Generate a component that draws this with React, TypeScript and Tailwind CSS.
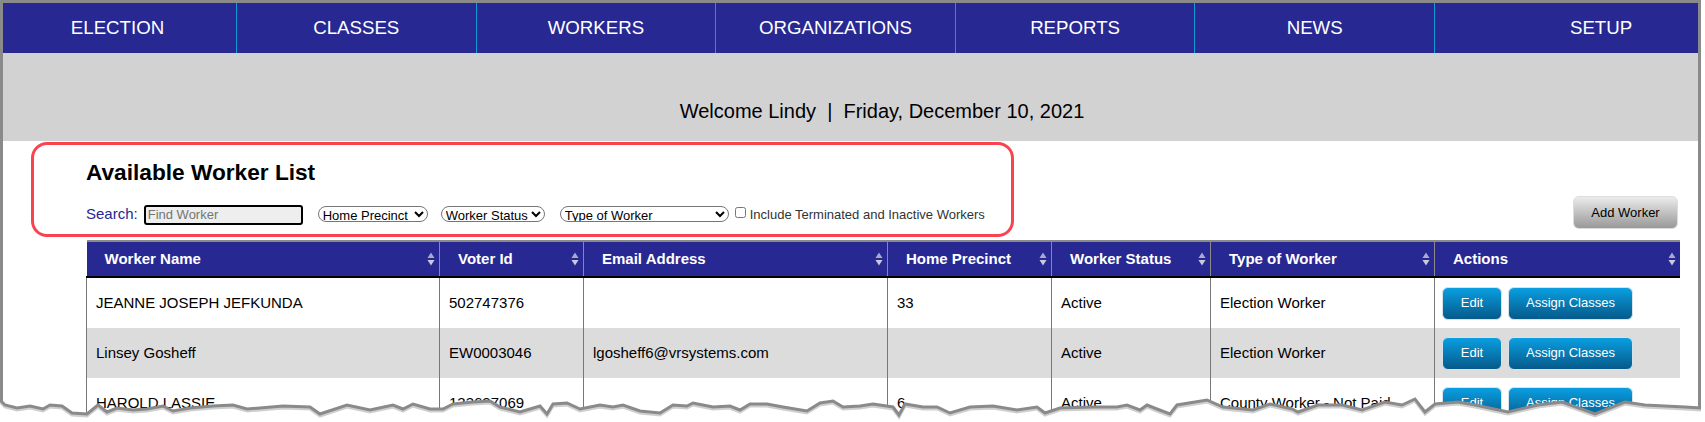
import { Fragment } from "react"

const navItems = [
  { label: "ELECTION", cell: "w-[233px] justify-center pr-[4px]" },
  { label: "CLASSES", cell: "flex-1 justify-center" },
  { label: "WORKERS", cell: "flex-1 justify-center" },
  { label: "ORGANIZATIONS", cell: "flex-1 justify-center" },
  { label: "REPORTS", cell: "flex-1 justify-center" },
  { label: "NEWS", cell: "flex-1 justify-center" },
  { label: "SETUP", cell: "w-[263px] pl-[135px]" },
]

const columns = [
  { label: "Worker Name", width: "w-[353px]" },
  { label: "Voter Id", width: "w-[144px]" },
  { label: "Email Address", width: "w-[304px]" },
  { label: "Home Precinct", width: "w-[164px]" },
  { label: "Worker Status", width: "w-[159px]" },
  { label: "Type of Worker", width: "w-[224px]" },
  { label: "Actions", width: "w-[245px]" },
]

const rows = [
  ["JEANNE JOSEPH JEFKUNDA", "502747376", "", "33", "Active", "Election Worker"],
  ["Linsey Gosheff", "EW0003046", "lgosheff6@vrsystems.com", "", "Active", "Election Worker"],
  ["HAROLD LASSIE", "133637069", "", "6", "Active", "County Worker - Not Paid"],
]

const tornEdge =
  "0,400 5,405 17,408 30,406 43,409 50,405 62,406 72,413 87,414 98,405 107,412 117,408 133,410 147,409 163,406 173,411 190,408 213,406 233,405 247,409 283,406 310,407 320,414 347,405 370,410 393,405 403,409 413,404 430,409 443,409 453,404 473,402 490,401 500,407 520,412 540,406 547,414 553,404 567,403 580,409 600,405 613,407 623,405 640,411 660,413 673,405 687,406 693,403 713,407 730,406 740,410 750,404 767,404 783,407 807,411 820,403 833,401 843,407 860,406 873,404 893,407 899,415 905,404 923,407 937,407 950,413 970,407 993,406 1017,410 1037,407 1045,413 1060,408 1093,407 1117,407 1127,405 1140,410 1147,405 1157,409 1170,414 1177,405 1207,400 1223,407 1253,410 1270,404 1292,409 1298,412 1318,405 1342,405 1362,410 1385,402 1402,405 1415,399 1425,412 1435,404 1458,402 1475,405 1508,412 1538,405 1562,402 1595,414 1625,402 1645,405 1685,407 1701,408"

function SortIcon() {
  return (
    <svg width="8" height="14" viewBox="0 0 8 14" className="absolute right-[4px] top-[10px]">
      <path d="M4 0.5 L7.5 6 L0.5 6 Z" fill="#a9a9cf" />
      <path d="M4 13.5 L7.5 8 L0.5 8 Z" fill="#c9c9dd" />
    </svg>
  )
}

function ActionButton({ label, width }: { label: string; width: string }) {
  return (
    <button
      className={`${width} h-[33px] rounded-md border border-[#d5e3ea] bg-gradient-to-b from-[#0a9fe2] to-[#055a8a] text-[13px] text-white`}
    >
      {label}
    </button>
  )
}

export default function App() {
  return (
    <div className="relative h-[422px] w-[1705px] overflow-hidden bg-white font-['Liberation_Sans',Arial,sans-serif] text-black">
      <div className="h-full w-[1701px] border-x-[3px] border-t-[3px] border-[#8a8a8a]">
        <nav className="flex h-[50px] bg-[#282893]">
          {navItems.map((item, i) => (
            <Fragment key={item.label}>
              {i > 0 && <div className="w-px bg-[#0f9ad6]" />}
              <div className={`flex items-center text-[18.67px] text-white ${item.cell}`}>{item.label}</div>
            </Fragment>
          ))}
        </nav>

        <div className="flex h-[88px] items-end justify-center bg-[#d2d2d2] pb-[15px] pl-[63px] text-[20px]">
          Welcome Lindy &nbsp;|&nbsp; Friday, December 10, 2021
        </div>

        <div className="relative flex h-[99px] flex-col pl-[83px] pr-[20px]">
          <h1 className="mt-[18px] text-[22.67px] font-bold leading-[26px]">Available Worker List</h1>
          <div className="mt-[13px] flex items-center">
            <label className="text-[15px] text-[#27288f]">Search:</label>
            <div className="ml-[6px] flex h-[20px] w-[159px] items-center rounded-[3px] border-2 border-black bg-[#eeeeee] pl-[2px] text-[13px] text-[#757575]">
              Find Worker
            </div>
            <select className="ml-[15px] h-[16px] w-[110px] -translate-y-px rounded-lg border border-[#767676] text-[13px] leading-[14px] text-black">
              <option>Home Precinct</option>
            </select>
            <select className="ml-[13px] h-[16px] w-[104px] -translate-y-px rounded-lg border border-[#767676] text-[13px] leading-[14px] text-black">
              <option>Worker Status</option>
            </select>
            <select className="ml-[15px] h-[16px] w-[169px] -translate-y-px rounded-lg border border-[#767676] text-[13px] leading-[14px] text-black">
              <option>Type of Worker</option>
            </select>
            <input type="checkbox" className="ml-[6px] h-[11px] w-[11px] -translate-y-[2px]" readOnly />
            <span className="ml-[4px] text-[13px] text-[#333333]">Include Terminated and Inactive Workers</span>
            <button className="ml-auto h-[33px] w-[105px] -translate-y-[2px] rounded-md border border-[#dcdcdc] bg-gradient-to-b from-[#ececec] to-[#999999] text-[13px] text-black">
              Add Worker
            </button>
          </div>
        </div>

        <div className="pl-[83px]">
          <table className="w-[1593px] table-fixed border-collapse text-[15px]">
            <thead>
              <tr className="h-[36px] bg-[#282893] text-white">
                {columns.map((col) => (
                  <th
                    key={col.label}
                    className={`relative border-x border-t-2 border-b-2 border-x-[#8a8a8a] border-t-[#8a8a8a] border-b-black pl-[18px] text-left font-bold first:border-l-0 last:border-r-0 ${col.width}`}
                  >
                    {col.label}
                    <SortIcon />
                  </th>
                ))}
              </tr>
            </thead>
            <tbody>
              {rows.map((row, i) => (
                <tr key={i} className={i === 1 ? "h-[50px] bg-[#dcdcdc]" : i === 0 ? "h-[51px]" : "h-[50px]"}>
                  {row.map((cell, j) => (
                    <td key={j} className="border-x border-[#777777] pl-[9px]">
                      {cell}
                    </td>
                  ))}
                  <td className="pl-[7px]">
                    <div className="flex gap-[6px]">
                      <ActionButton label="Edit" width="w-[60px]" />
                      <ActionButton label="Assign Classes" width="w-[125px]" />
                    </div>
                  </td>
                </tr>
              ))}
            </tbody>
          </table>
        </div>
      </div>

      {/* callout round the search controls */}
      <div className="absolute left-[31px] top-[142px] h-[95px] w-[983px] rounded-[16px] border-[3px] border-[#f9444f]" />

      {/* torn bottom edge of the screenshot */}
      <svg width="1705" height="422" viewBox="0 0 1705 422" className="absolute left-0 top-0">
        <polygon points={`${tornEdge} 1705,408 1705,422 0,422`} fill="#ffffff" />
        <polyline points={tornEdge} fill="none" stroke="#cfcfcf" strokeWidth="3" transform="translate(0 2)" />
        <polyline points={tornEdge} fill="none" stroke="#8a8a8a" strokeWidth="3" />
      </svg>
    </div>
  )
}
